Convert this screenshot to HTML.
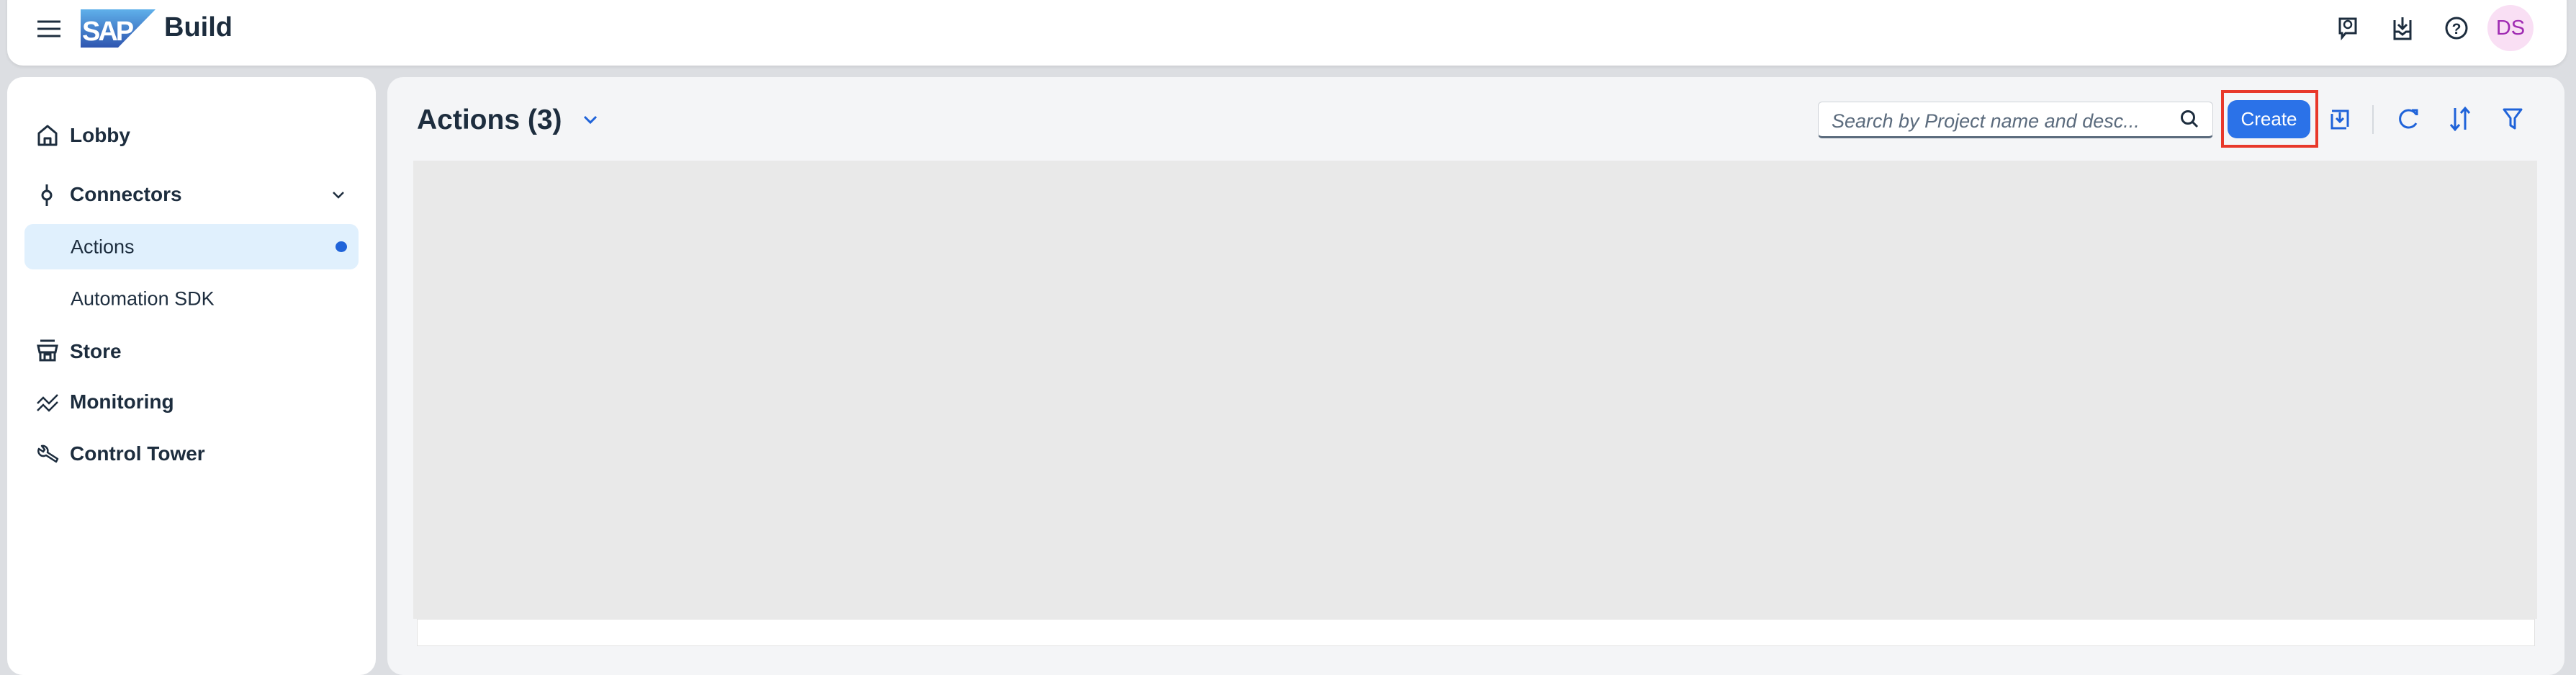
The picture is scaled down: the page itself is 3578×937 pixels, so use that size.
<!DOCTYPE html>
<html><head><meta charset="utf-8"><style>
*{margin:0;padding:0;box-sizing:border-box}
body{width:3578px;height:908px;background:#dcdee2;font-family:"Liberation Sans",sans-serif;position:relative;overflow:hidden;color:#1d2d3e}
.abs{position:absolute}
.hdr{left:10px;top:-20px;width:3555px;height:111px;background:#fff;border-radius:22px;box-shadow:0 2px 4px rgba(0,0,0,.08)}
.side{left:10px;top:107px;width:512px;height:830px;background:#fff;border-radius:22px}
.main{left:538px;top:107px;width:3024px;height:830px;background:#f4f5f7;border-radius:22px}
.nav{position:absolute;left:97px;font-size:28px;font-weight:bold;transform:translateY(-50%)}
.sub{position:absolute;left:98px;font-size:27px;transform:translateY(-50%)}
svg{position:absolute;overflow:visible}
</style></head><body>
<div class="abs hdr"></div>
<svg style="left:52px;top:28px" width="34" height="24"><path d="M0 2H32M0 12H32M0 22H32" stroke="#1d2d3e" stroke-width="3"/></svg>
<svg style="left:112px;top:13px" width="106" height="53"><defs><linearGradient id="g" x1="0" y1="0" x2="0" y2="1"><stop offset="0" stop-color="#5fb0ea"/><stop offset="1" stop-color="#2f56b0"/></linearGradient></defs><path d="M0 0H104L52 53H0Z" fill="url(#g)"/><text x="2" y="43" font-family="Liberation Sans" font-weight="bold" font-size="38" fill="#fff" letter-spacing="-3">SAP</text></svg>
<div class="abs" style="left:228px;top:17px;font-size:38px;font-weight:bold">Build</div>
<svg style="left:3246px;top:22px" width="30" height="36"><path d="M4 4h22v20H12l-5 6v-6H4z" fill="none" stroke="#1d2d3e" stroke-width="3"/><circle cx="15" cy="12" r="5" fill="none" stroke="#1d2d3e" stroke-width="2.5"/></svg>
<svg style="left:3322px;top:22px" width="30" height="36"><path d="M4 6v26h22V6M15 2v16M9 12l6 6 6-6M4 22h6l5 4 5-4h6" fill="none" stroke="#1d2d3e" stroke-width="3"/></svg>
<svg style="left:3396px;top:23px" width="32" height="32"><circle cx="16" cy="16" r="14" fill="none" stroke="#1d2d3e" stroke-width="3"/><text x="16" y="24" text-anchor="middle" font-family="Liberation Sans" font-weight="bold" font-size="21" fill="#1d2d3e">?</text></svg>
<div class="abs" style="left:3455px;top:7px;width:64px;height:64px;border-radius:50%;background:#f9dff4;color:#a02cb3;font-size:29px;text-align:center;line-height:64px">DS</div>

<div class="abs side"></div>
<svg style="left:52px;top:173px" width="28" height="30"><path d="M2 12L14 2l12 10v16H2z M10 28v-9h8v9" fill="none" stroke="#1d2d3e" stroke-width="3" stroke-linejoin="round"/></svg>
<div class="nav" style="top:188px">Lobby</div>
<svg style="left:55px;top:256px" width="20" height="30"><circle cx="10" cy="15" r="6" fill="none" stroke="#1d2d3e" stroke-width="3"/><path d="M10 0v9M10 21v9" stroke="#1d2d3e" stroke-width="3"/></svg>
<div class="nav" style="top:270px">Connectors</div>
<svg style="left:462px;top:266px" width="16" height="10"><path d="M1 1l7 7 7-7" fill="none" stroke="#1d2d3e" stroke-width="2.5"/></svg>
<div class="abs" style="left:34px;top:311px;width:464px;height:63px;background:#e0f0fd;border-radius:12px"></div>
<div class="sub" style="top:343px">Actions</div>
<div class="abs" style="left:466px;top:335px;width:16px;height:15px;border-radius:50%;background:#1f63d9"></div>
<div class="sub" style="top:415px">Automation SDK</div>
<svg style="left:50px;top:471px" width="32" height="31"><path d="M6 2h20M3 9h26l-2 9H5z M6 18v11h20v-11 M12 29v-8h8v8" fill="none" stroke="#1d2d3e" stroke-width="3"/></svg>
<div class="nav" style="top:488px">Store</div>
<svg style="left:50px;top:546px" width="32" height="26"><path d="M2 14l8-8 8 8 12-12 M2 24l8-8 8 8 12-12" fill="none" stroke="#1d2d3e" stroke-width="2.5"/></svg>
<div class="nav" style="top:558px">Monitoring</div>
<svg style="left:50px;top:617px" width="32" height="28"><path d="M4 6a7 7 0 0 0 10 9l14 9 2-4-14-9a7 7 0 0 0-8-9l4 5-2 3z" fill="none" stroke="#1d2d3e" stroke-width="2.5" stroke-linejoin="round"/></svg>
<div class="nav" style="top:630px">Control Tower</div>

<div class="abs main"></div>
<div class="abs" style="left:579px;top:145px;font-size:39px;font-weight:bold">Actions (3)</div>
<svg style="left:810px;top:160px" width="20" height="12"><path d="M2 2l8 8 8-8" fill="none" stroke="#1f63d9" stroke-width="3"/></svg>
<div class="abs" style="left:2525px;top:141px;width:549px;height:51px;background:#fff;border:1px solid #cfd3d8;border-bottom:3px solid #5b6b7d;border-radius:6px;font-size:27px;font-style:italic;color:#5b6b7d;padding:11px 0 0 18px">Search by Project name and desc...</div>
<svg style="left:3028px;top:152px" width="28" height="28"><circle cx="11" cy="11" r="8.5" fill="none" stroke="#1d2d3e" stroke-width="3"/><path d="M17 17l7 7" stroke="#1d2d3e" stroke-width="3"/></svg>
<div class="abs" style="left:3085px;top:125px;width:135px;height:80px;border:4px solid #e8382a"></div>
<div class="abs" style="left:3094px;top:139px;width:115px;height:53px;background:#2b72e8;border-radius:13px;color:#fff;font-size:26px;text-align:center;line-height:53px">Create</div>
<svg style="left:3235px;top:150px" width="30" height="30"><path d="M4 8v20h20M4 4h22v22" fill="none" stroke="#1f63d9" stroke-width="3"/><path d="M10 14l5 5 5-5M15 6v13" fill="none" stroke="#1f63d9" stroke-width="3"/></svg>
<div class="abs" style="left:3295px;top:146px;width:2px;height:40px;background:#d5d9de"></div>
<svg style="left:3330px;top:149px" width="30" height="32"><path d="M26 10A12 12 0 1 0 26 22" fill="none" stroke="#1f63d9" stroke-width="3"/><path d="M20 4h7v7" fill="none" stroke="#1f63d9" stroke-width="3"/></svg>
<svg style="left:3402px;top:148px" width="30" height="34"><path d="M8 2v30M2 25l6 7 6-7M22 32V2M16 9l6-7 6 7" fill="none" stroke="#1f63d9" stroke-width="3"/></svg>
<svg style="left:3476px;top:150px" width="28" height="32"><path d="M2 2h24l-9 12v14l-6-4V14z" fill="none" stroke="#1f63d9" stroke-width="3" stroke-linejoin="round"/></svg>
<div class="abs" style="left:574px;top:223px;width:2950px;height:636px;background:#e9e9e9"></div>
<div class="abs" style="left:579px;top:859px;width:2942px;height:38px;background:#fff;border:1px solid #e2e2e2"></div>
</body></html>
